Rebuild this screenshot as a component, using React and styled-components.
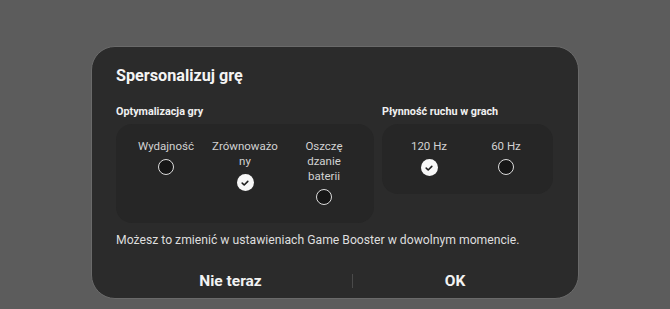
import React from "react";
import styled, { createGlobalStyle } from "styled-components";

const Global = createGlobalStyle`
  html, body { margin: 0; padding: 0; background: #5c5c5c; }
  body { font-family: Roboto, "Noto Sans", sans-serif; -webkit-font-smoothing: antialiased; }
`;

const Page = styled.div`
  width: 670px;
  height: 309px;
  display: flex;
  justify-content: center;
  align-items: flex-start;
  padding-top: 46px;
  box-sizing: border-box;
  background: #5c5c5c;
  overflow: hidden;
`;

const Dialog = styled.div`
  width: 488px;
  height: 253px;
  box-sizing: border-box;
  background: #2b2b2b;
  border: 1px solid #6a6a6a;
  border-radius: 24px;
  padding: 18px 24px 0 24px;
  display: flex;
  flex-direction: column;
  color: #f4f4f4;
`;

const Title = styled.div`
  font-size: 16.2px;
  font-weight: 700;
  line-height: 22px;
`;

const Sections = styled.div`
  display: grid;
  grid-template-columns: 258px 171px;
  column-gap: 8px;
  align-items: start;
  margin-top: 18px;
`;

const Section = styled.div`
  display: flex;
  flex-direction: column;
`;

const Heading = styled.div`
  font-size: 10.8px;
  font-weight: 700;
  line-height: 14px;
  color: #f0f0f0;
  margin-bottom: 5px;
`;

const Panel = styled.div`
  background: #262626;
  border-radius: 16px;
  display: flex;
  padding: 15px ${(p) => p.$pad}px 0;
  height: ${(p) => p.$h}px;
  box-sizing: border-box;
`;

const Option = styled.div`
  width: ${(p) => p.$w}px;
  display: flex;
  flex-direction: column;
  align-items: center;
`;

const Label = styled.div`
  font-size: 11.5px;
  line-height: 15px;
  color: #d2d2d2;
  text-align: center;
  margin-bottom: 5px;
`;

const Radio = styled.div`
  width: 16px;
  height: 16px;
  box-sizing: border-box;
  border-radius: 50%;
  border: 1.5px solid #dcdcdc;
  background: #161616;
`;

const Checked = styled.div`
  width: 17px;
  height: 17px;
  border-radius: 50%;
  background: #f7f7f7;
  display: flex;
  align-items: center;
  justify-content: center;
`;

const Note = styled.div`
  font-size: 12.2px;
  line-height: 16px;
  color: #dedede;
  margin-top: 9px;
`;

const Buttons = styled.div`
  display: grid;
  grid-template-columns: 243px 1px 1fr;
  align-items: center;
  margin: 18px -3px 0 -7px;
  height: 30px;
`;

const Button = styled.div`
  text-align: center;
  font-size: 15.5px;
  font-weight: 700;
  color: #f2f2f2;
`;

const Divider = styled.div`
  width: 1px;
  height: 14px;
  background: #4a4a4a;
`;

const Check = ({ on }) =>
  on ? (
    <Checked>
      <svg width="10" height="10" viewBox="0 0 10 10">
        <path d="M2.2 5.1 L4.2 7 L7.8 3.4" fill="none" stroke="#1e1e1e" strokeWidth="1.6" strokeLinecap="round" strokeLinejoin="round" />
      </svg>
    </Checked>
  ) : (
    <Radio />
  );

const optimize = [
  { lines: ["Wydajność"], on: false },
  { lines: ["Zrównoważo", "ny"], on: true },
  { lines: ["Oszczę", "dzanie", "baterii"], on: false },
];
const refresh = [
  { lines: ["120 Hz"], on: true },
  { lines: ["60 Hz"], on: false },
];

const Opt = ({ o, w }) => (
  <Option $w={w}>
    <Label>
      {o.lines.map((l, i) => (
        <div key={i}>{l}</div>
      ))}
    </Label>
    <Check on={o.on} />
  </Option>
);

export default function App() {
  return (
    <>
      <Global />
      <Page>
        <Dialog>
          <Title>Spersonalizuj grę</Title>
          <Sections>
            <Section>
              <Heading>Optymalizacja gry</Heading>
              <Panel $pad={10.5} $h={99}>
                {optimize.map((o, i) => (
                  <Opt key={i} o={o} w={79} />
                ))}
              </Panel>
            </Section>
            <Section>
              <Heading>Płynność ruchu w grach</Heading>
              <Panel $pad={8.5} $h={70}>
                {refresh.map((o, i) => (
                  <Opt key={i} o={o} w={77} />
                ))}
              </Panel>
            </Section>
          </Sections>
          <Note>Możesz to zmienić w ustawieniach Game Booster w dowolnym momencie.</Note>
          <Buttons>
            <Button>Nie teraz</Button>
            <Divider />
            <Button>OK</Button>
          </Buttons>
        </Dialog>
      </Page>
    </>
  );
}
